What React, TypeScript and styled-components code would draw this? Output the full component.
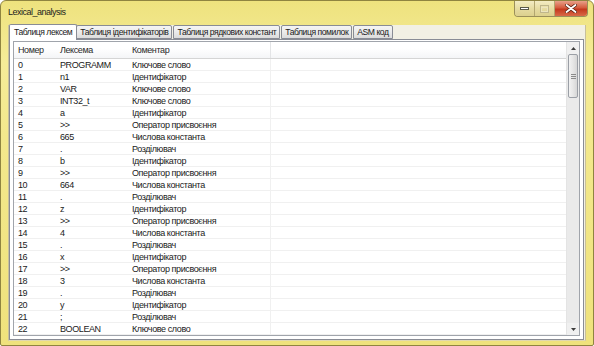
import React from 'react';
import styled, { createGlobalStyle } from 'styled-components';

const rows: [string, string, string][] = [
  ['0', 'PROGRAMM', 'Ключове слово'],
  ['1', 'n1', 'Ідентифікатор'],
  ['2', 'VAR', 'Ключове слово'],
  ['3', 'INT32_t', 'Ключове слово'],
  ['4', 'a', 'Ідентифікатор'],
  ['5', '>>', 'Оператор присвоєння'],
  ['6', '665', 'Числова константа'],
  ['7', '.', 'Розділювач'],
  ['8', 'b', 'Ідентифікатор'],
  ['9', '>>', 'Оператор присвоєння'],
  ['10', '664', 'Числова константа'],
  ['11', '.', 'Розділювач'],
  ['12', 'z', 'Ідентифікатор'],
  ['13', '>>', 'Оператор присвоєння'],
  ['14', '4', 'Числова константа'],
  ['15', '.', 'Розділювач'],
  ['16', 'x', 'Ідентифікатор'],
  ['17', '>>', 'Оператор присвоєння'],
  ['18', '3', 'Числова константа'],
  ['19', '.', 'Розділювач'],
  ['20', 'y', 'Ідентифікатор'],
  ['21', ';', 'Розділювач'],
  ['22', 'BOOLEAN', 'Ключове слово'],
];

const tabs = [
  'Таблиця лексем',
  'Таблиця ідентифікаторів',
  'Таблиця рядкових констант',
  'Таблиця помилок',
  'ASM код',
];

// column widths: Номер / Лексема / Коментар / filler
const cols = [42, 72, 143];

const App = () => {
  return (
    <>
      <GlobalStyle />
      <Window>
        <TitleBar>
          <Title>Lexical_analysis</Title>
          <Caption>
            <CapButton>
              <svg width="9" height="3" viewBox="0 0 9 3">
                <rect x="0.5" y="0.5" width="8" height="2" fill="#fff" stroke="#5a5a4a" strokeWidth="1" />
              </svg>
            </CapButton>
            <CapButton>
              <svg width="9" height="8" viewBox="0 0 9 8">
                <rect x="0.5" y="0.5" width="8" height="7" fill="none" stroke="#bfb68c" strokeWidth="1" />
                <rect x="1.5" y="2.5" width="6" height="4" fill="none" stroke="#ece5bf" strokeWidth="1" />
              </svg>
            </CapButton>
            <CloseButton>
              <svg width="12" height="9" viewBox="0 0 12 9">
                <path d="M1.5 1 L10.5 8 M10.5 1 L1.5 8" stroke="#5a2414" strokeWidth="3.4" strokeLinecap="round" />
                <path d="M1.5 1 L10.5 8 M10.5 1 L1.5 8" stroke="#fff" strokeWidth="1.8" strokeLinecap="round" />
              </svg>
            </CloseButton>
          </Caption>
        </TitleBar>
        <Client>
          <TabStrip>
            {tabs.map((t, i) => (
              <Tab key={t} $active={i === 0}>
                {t}
              </Tab>
            ))}
          </TabStrip>
          <TabPanel>
            <ListView>
              <ListBody>
                <HeaderRow>
                  <HeadCell $w={cols[0]}>Номер</HeadCell>
                  <HeadCell $w={cols[1]}>Лексема</HeadCell>
                  <HeadCell $w={cols[2]} $divider>
                    Коментар
                  </HeadCell>
                  <HeadCell $fill />
                </HeaderRow>
                {rows.map((r) => (
                  <Row key={r[0]}>
                    <Cell $w={cols[0]}>{r[0]}</Cell>
                    <Cell $w={cols[1]}>{r[1]}</Cell>
                    <Cell $w={cols[2]} $divider>
                      {r[2]}
                    </Cell>
                    <Cell $fill />
                  </Row>
                ))}
              </ListBody>
              <ScrollBar>
                <ScrollArrow>
                  <svg width="5" height="3" viewBox="0 0 5 3">
                    <path d="M0 3 L2.5 0 L5 3 Z" fill="#3c3c3c" />
                  </svg>
                </ScrollArrow>
                <Thumb>
                  <Grip />
                  <Grip />
                  <Grip />
                </Thumb>
                <Track />
                <ScrollArrow>
                  <svg width="5" height="3" viewBox="0 0 5 3">
                    <path d="M0 0 L2.5 3 L5 0 Z" fill="#3c3c3c" />
                  </svg>
                </ScrollArrow>
              </ScrollBar>
            </ListView>
          </TabPanel>
        </Client>
      </Window>
    </>
  );
};

const GlobalStyle = createGlobalStyle`
  html, body {
    margin: 0;
    padding: 0;
    width: 594px;
    height: 346px;
    overflow: hidden;
    background: #ffffff;
  }
  #root {
    width: 594px;
    height: 346px;
  }
`;

const Window = styled.div`
  box-sizing: border-box;
  width: 594px;
  height: 346px;
  display: flex;
  flex-direction: column;
  border: 1px solid #8f8440;
  border-radius: 6px 6px 2px 2px;
  background: linear-gradient(180deg, #eee27e 0%, #f5ec98 18%, #f3e88c 40%, #efe27c 100%);
  font-family: 'Liberation Sans', Arial, sans-serif;
  overflow: hidden;
`;

const TitleBar = styled.div`
  height: 24px;
  flex-shrink: 0;
  display: flex;
  justify-content: space-between;
  align-items: flex-start;
  padding-left: 7px;
`;

const Title = styled.div`
  font-size: 9px;
  color: #1c1c1c;
  margin-top: 6px;
  letter-spacing: -0.5px;
`;

const Caption = styled.div`
  display: flex;
  margin-right: 5px;
  border: 1px solid #9a8f5a;
  border-top: none;
  border-radius: 0 0 4px 4px;
  overflow: hidden;
  height: 15px;
`;

const CapButton = styled.div`
  width: 19px;
  height: 15px;
  display: flex;
  align-items: center;
  justify-content: center;
  background: linear-gradient(180deg, #f3ecc4 0%, #e6dca2 50%, #dcd08e 100%);
  border-right: 1px solid #b2a670;
`;

const CloseButton = styled.div`
  width: 32px;
  height: 15px;
  display: flex;
  align-items: center;
  justify-content: center;
  background: linear-gradient(180deg, #e8a08a 0%, #d55b3e 45%, #c4381e 55%, #d86a48 100%);
`;

const Client = styled.div`
  flex: 1;
  display: flex;
  flex-direction: column;
  margin: 0 7px 8px 7px;
  background: #f2f0e4;
  border: 1px solid #c8c09a;
  border-top: none;
  border-bottom-color: #e0d8b0;
`;

const TabStrip = styled.div`
  height: 14px;
  display: flex;
  align-items: flex-end;
  padding-left: 1px;
  position: relative;
  z-index: 1;
`;

const Tab = styled.div<{ $active?: boolean }>`
  box-sizing: border-box;
  height: ${(p) => (p.$active ? '16px' : '14px')};
  padding: ${(p) => (p.$active ? '2px 4px 0 4px' : '1px 3px 0 3px')};
  margin-right: ${(p) => (p.$active ? '-1px' : '1px')};
  margin-left: ${(p) => (p.$active ? '-1px' : '0')};
  margin-bottom: ${(p) => (p.$active ? '-1px' : '0')};
  font-size: 8.6px;
  letter-spacing: -0.45px;
  line-height: 11px;
  color: #1a1a1a;
  white-space: nowrap;
  border: 1px solid #898c95;
  border-bottom: ${(p) => (p.$active ? 'none' : '1px solid #898c95')};
  border-radius: 2px 2px 0 0;
  background: ${(p) =>
    p.$active ? '#ffffff' : 'linear-gradient(180deg, #f4f4f4 0%, #ebebeb 50%, #dcdcdc 100%)'};
`;

const TabPanel = styled.div`
  flex: 1;
  display: flex;
  background: #ffffff;
  border: 1px solid #898c95;
  padding: 1px 3px 3px 3px;
  margin-right: 1px;
`;

const ListView = styled.div`
  flex: 1;
  display: flex;
  border: 1px solid #a0a4ab;
  background: #ffffff;
  overflow: hidden;
`;

const ListBody = styled.div`
  flex: 1;
  display: flex;
  flex-direction: column;
  overflow: hidden;
`;

const HeaderRow = styled.div`
  display: flex;
  height: 16px;
  flex-shrink: 0;
  background: linear-gradient(180deg, #ffffff 0%, #ffffff 40%, #f4f5f7 100%);
  border-bottom: 1px solid #d5d5d5;
`;

const HeadCell = styled.div<{ $w?: number; $fill?: boolean; $divider?: boolean }>`
  ${(p) => (p.$fill ? 'flex: 1;' : `width: ${p.$w}px; flex-shrink: 0;`)}
  box-sizing: border-box;
  padding-left: 4px;
  font-size: 9px;
  letter-spacing: -0.4px;
  line-height: 16px;
  color: #2a2a2a;
  border-right: 1px solid ${(p) => (p.$divider ? '#e3e4e6' : 'transparent')};
  white-space: nowrap;
`;

const Row = styled.div`
  display: flex;
  height: 12px;
  flex-shrink: 0;
  border-bottom: 1px solid #f0f0f0;
  box-sizing: border-box;
`;

const Cell = styled.div<{ $w?: number; $fill?: boolean; $divider?: boolean }>`
  ${(p) => (p.$fill ? 'flex: 1;' : `width: ${p.$w}px; flex-shrink: 0;`)}
  box-sizing: border-box;
  padding-left: 4px;
  font-size: 9px;
  letter-spacing: -0.4px;
  line-height: 12px;
  color: #1a1a1a;
  border-right: 1px solid ${(p) => (p.$divider ? '#f0f0f0' : 'transparent')};
  white-space: nowrap;
  overflow: hidden;
`;

const ScrollBar = styled.div`
  width: 12px;
  flex-shrink: 0;
  display: flex;
  flex-direction: column;
  background: #eaeaea;
  border-left: 1px solid #e4e4e4;
`;

const ScrollArrow = styled.div`
  height: 12px;
  display: flex;
  align-items: center;
  justify-content: center;
  background: #f0f0f0;
`;

const Thumb = styled.div`
  box-sizing: border-box;
  height: 44px;
  margin: 0 1px;
  border: 1px solid #9b9fa6;
  border-radius: 2px;
  background: linear-gradient(90deg, #f2f2f2 0%, #e6e6e6 50%, #d6d6d6 100%);
  display: flex;
  flex-direction: column;
  align-items: center;
  justify-content: center;
  gap: 1px;
`;

const Grip = styled.div`
  width: 5px;
  height: 1px;
  background: #8a8a8a;
`;

const Track = styled.div`
  flex: 1;
`;

export default App;
